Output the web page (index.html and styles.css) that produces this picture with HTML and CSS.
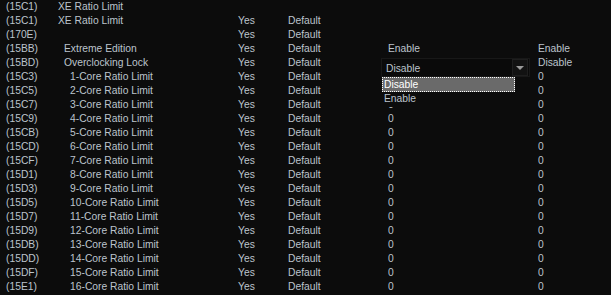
FILE: index.html
```html
<!DOCTYPE html>
<html>
<head>
<meta charset="utf-8">
<link rel="stylesheet" href="styles.css">
</head>
<body>
<div class="table">
  <div class="row"><span>(15C1)</span><span>XE Ratio Limit</span><span></span><span></span><span></span><span></span></div>
  <div class="row"><span>(15C1)</span><span>XE Ratio Limit</span><span>Yes</span><span>Default</span><span></span><span></span></div>
  <div class="row"><span>(170E)</span><span></span><span>Yes</span><span>Default</span><span></span><span></span></div>
  <div class="row"><span>(15BB)</span><span class="ind1">Extreme Edition</span><span>Yes</span><span>Default</span><span>Enable</span><span>Enable</span></div>
  <div class="row"><span>(15BD)</span><span class="ind1">Overclocking Lock</span><span>Yes</span><span>Default</span>
    <span class="sel-cell">
      <span class="select"><span class="sel-text">Disable</span><span class="arrow-box"><span class="arrow"></span></span></span>
      <span class="list">
        <span class="opt active">Disable</span>
        <span class="opt">Enable</span>
      </span>
    </span>
    <span>Disable</span></div>
  <div class="row"><span>(15C3)</span><span class="ind2">1-Core Ratio Limit</span><span>Yes</span><span>Default</span><span></span><span>0</span></div>
  <div class="row"><span>(15C5)</span><span class="ind2">2-Core Ratio Limit</span><span>Yes</span><span>Default</span><span></span><span>0</span></div>
  <div class="row"><span>(15C7)</span><span class="ind2">3-Core Ratio Limit</span><span>Yes</span><span>Default</span><span class="cut">0</span><span>0</span></div>
  <div class="row"><span>(15C9)</span><span class="ind2">4-Core Ratio Limit</span><span>Yes</span><span>Default</span><span>0</span><span>0</span></div>
  <div class="row"><span>(15CB)</span><span class="ind2">5-Core Ratio Limit</span><span>Yes</span><span>Default</span><span>0</span><span>0</span></div>
  <div class="row"><span>(15CD)</span><span class="ind2">6-Core Ratio Limit</span><span>Yes</span><span>Default</span><span>0</span><span>0</span></div>
  <div class="row"><span>(15CF)</span><span class="ind2">7-Core Ratio Limit</span><span>Yes</span><span>Default</span><span>0</span><span>0</span></div>
  <div class="row"><span>(15D1)</span><span class="ind2">8-Core Ratio Limit</span><span>Yes</span><span>Default</span><span>0</span><span>0</span></div>
  <div class="row"><span>(15D3)</span><span class="ind2">9-Core Ratio Limit</span><span>Yes</span><span>Default</span><span>0</span><span>0</span></div>
  <div class="row"><span>(15D5)</span><span class="ind2">10-Core Ratio Limit</span><span>Yes</span><span>Default</span><span>0</span><span>0</span></div>
  <div class="row"><span>(15D7)</span><span class="ind2">11-Core Ratio Limit</span><span>Yes</span><span>Default</span><span>0</span><span>0</span></div>
  <div class="row"><span>(15D9)</span><span class="ind2">12-Core Ratio Limit</span><span>Yes</span><span>Default</span><span>0</span><span>0</span></div>
  <div class="row"><span>(15DB)</span><span class="ind2">13-Core Ratio Limit</span><span>Yes</span><span>Default</span><span>0</span><span>0</span></div>
  <div class="row"><span>(15DD)</span><span class="ind2">14-Core Ratio Limit</span><span>Yes</span><span>Default</span><span>0</span><span>0</span></div>
  <div class="row"><span>(15DF)</span><span class="ind2">15-Core Ratio Limit</span><span>Yes</span><span>Default</span><span>0</span><span>0</span></div>
  <div class="row"><span>(15E1)</span><span class="ind2">16-Core Ratio Limit</span><span>Yes</span><span>Default</span><span>0</span><span>0</span></div>
</div>
</body>
</html>
```
FILE: styles.css
```css
html, body {
  margin: 0;
  padding: 0;
  background: #0c0c0c;
  overflow: hidden;
}
body {
  font-family: "Liberation Sans", Arial, sans-serif;
  font-size: 10.3px;
  color: #bcc4cc;
}
.table {
  display: flex;
  flex-direction: column;
}
.row {
  display: grid;
  grid-template-columns: 52px 180px 50px 100px 150px 1fr;
  height: 14px;
  line-height: 14px;
  padding-left: 6px;
  white-space: nowrap;
}
.ind1 { padding-left: 6px; }
.ind2 { padding-left: 12px; }
.cut {
  display: flex;
  align-items: flex-end;
  height: 14px;
  overflow: hidden;
}
.cut::before {
  content: "";
}
.sel-cell {
  position: relative;
}
.select {
  position: absolute;
  left: -7px;
  top: 2px;
  width: 147px;
  height: 17px;
  background: #0a0a0a;
  border: 1px solid #181818;
  display: flex;
  align-items: center;
  justify-content: space-between;
}
.sel-text {
  padding-left: 4px;
  line-height: 17px;
  padding-top: 1px;
}
.arrow-box {
  width: 14px;
  height: 15px;
  margin-right: 1px;
  background: #121212;
  border: 1px solid #1e1e1e;
  display: flex;
  align-items: center;
  justify-content: center;
}
.arrow {
  width: 0;
  height: 0;
  border-left: 4px solid transparent;
  border-right: 4px solid transparent;
  border-top: 4px solid #9a9a9a;
}
.list {
  position: absolute;
  left: -6px;
  top: 21px;
  width: 133px;
  height: 30px;
  background: #0c0c0c;
  display: flex;
  flex-direction: column;
  z-index: 2;
}
.opt {
  height: 14px;
  line-height: 14px;
  padding-left: 2px;
  box-sizing: border-box;
}
.opt.active {
  background: #6a6a6a;
  color: #ffffff;
  border: 1px dotted #ffffff;
  line-height: 13px;
  padding-left: 1px;
  height: 15px;
}
```
